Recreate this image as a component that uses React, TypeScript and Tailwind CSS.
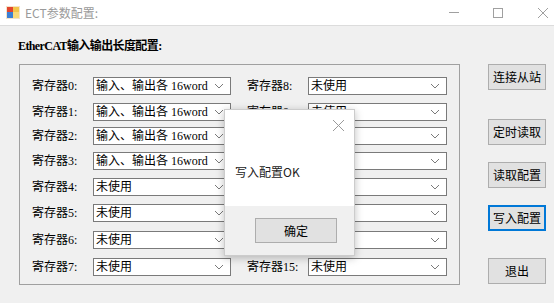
import React from "react";

const cjk = { fontFamily: '"Noto Sans CJK SC", "Noto Sans", sans-serif' };
const mixed = { fontFamily: '"Liberation Serif", "Noto Sans CJK SC", serif' };

function Chevron() {
  return (
    <svg width="10" height="6" viewBox="0 0 10 6" className="shrink-0">
      <path d="M1 1 L5 5 L9 1" fill="none" stroke="#7a7a7a" strokeWidth="1" />
    </svg>
  );
}

function Combo({ text, w }: { text: string; w: string }) {
  return (
    <div
      className={`${w} h-[18px] bg-white border border-[#7a7a7a] flex items-center justify-between pl-[2px] pr-[6px]`}
    >
      <span className="text-[12px] leading-none text-black whitespace-pre" style={mixed}>
        {text}
      </span>
      <Chevron />
    </div>
  );
}

const rowMargins = ["", "mt-[8px]", "mt-[6px]", "mt-[7px]", "mt-[8px]", "mt-[8px]", "mt-[9px]", "mt-[9px]"];
const leftVals = [
  "输入、输出各 16word",
  "输入、输出各 16word",
  "输入、输出各 16word",
  "输入、输出各 16word",
  "未使用",
  "未使用",
  "未使用",
  "未使用",
];

function Btn({ label, active, cls }: { label: string; active?: boolean; cls: string }) {
  return (
    <div
      className={`${cls} w-[58px] h-[26px] flex items-center justify-center text-[12px] text-black bg-[#e1e1e1] ${
        active ? "border-2 border-[#0078d7]" : "border border-[#adadad]"
      }`}
      style={cjk}
    >
      {label}
    </div>
  );
}

export default function App() {
  return (
    <div className="relative w-[554px] h-[303px] bg-[#f0f0f0] overflow-hidden flex flex-col" style={cjk}>
      {/* title bar */}
      <div className="h-[26px] bg-white border-b border-[#dcdcdc] flex items-center shrink-0">
        <svg width="14" height="13" viewBox="0 0 14 13" className="ml-[6px]">
          <rect x="0" y="0" width="14" height="13" fill="#f4e3c8" />
          <rect x="1" y="1" width="6" height="5" fill="#e2452e" />
          <rect x="7" y="1" width="6" height="5" fill="#f3c54a" />
          <rect x="1" y="6" width="6" height="6" fill="#3b7fd4" />
          <rect x="7" y="6" width="6" height="6" fill="#f9d978" />
        </svg>
        <span className="ml-[5px] text-[12px] text-[#9a9a9a]">ECT参数配置:</span>
        <div className="ml-auto flex items-center">
          <div className="w-[10px] h-px bg-[#a0a0a0] mr-[34px]" />
          <div className="w-[10px] h-[10px] border border-[#a0a0a0] mr-[35px]" />
          <svg width="10" height="10" viewBox="0 0 10 10" className="mr-[6px]">
            <path d="M0 0 L10 10 M10 0 L0 10" stroke="#a0a0a0" strokeWidth="1" />
          </svg>
        </div>
      </div>

      {/* heading */}
      <div
        className="pl-[18px] mt-[12px] text-[12px] font-bold leading-[16px] tracking-[-0.6px] text-black"
        style={mixed}
      >
        EtherCAT输入输出长度配置:
      </div>

      <div className="flex mt-[10px]">
        {/* group box */}
        <div className="ml-[19px] w-[441px] h-[221px] border border-[#a0a0a0] pt-[12px] pl-[12px]">
          {leftVals.map((v, i) => (
            <div key={i} className={`flex items-center ${rowMargins[i]}`}>
              <span className="w-[61px] text-[12px] text-black leading-none" style={mixed}>
                寄存器{i}:
              </span>
              <Combo text={v} w="w-[138px]" />
              <span className="ml-[16px] w-[61px] text-[12px] text-black leading-none" style={mixed}>
                寄存器{i + 8}:
              </span>
              <Combo text="未使用" w="w-[139px]" />
            </div>
          ))}
        </div>

        {/* buttons */}
        <div className="ml-[28px] flex flex-col">
          <Btn label="连接从站" cls="mt-[0px]" />
          <Btn label="定时读取" cls="mt-[29px]" />
          <Btn label="读取配置" cls="mt-[17px]" />
          <Btn label="写入配置" cls="mt-[17px]" active />
          <Btn label="退出" cls="mt-[27px]" />
        </div>
      </div>

      {/* message box */}
      <div className="absolute left-[224px] top-[109px] w-[131px] h-[147px] bg-white border border-[#cccccc] shadow-[0_2px_8px_rgba(0,0,0,0.25)] flex flex-col">
        <div className="flex-1 relative">
          <svg width="11" height="11" viewBox="0 0 11 11" className="absolute right-[10px] top-[10px]">
            <path d="M0 0 L11 11 M11 0 L0 11" stroke="#9a9a9a" strokeWidth="1" />
          </svg>
          <div className="absolute left-[10px] top-[53px] text-[12px] text-[#222]">写入配置OK</div>
        </div>
        <div className="h-[49px] bg-[#f0f0f0] flex items-start">
          <div className="ml-[30px] mt-[12px] w-[82px] h-[25px] bg-[#e1e1e1] border border-[#adadad] flex items-center justify-center text-[12px] text-black">
            确定
          </div>
        </div>
      </div>
    </div>
  );
}
